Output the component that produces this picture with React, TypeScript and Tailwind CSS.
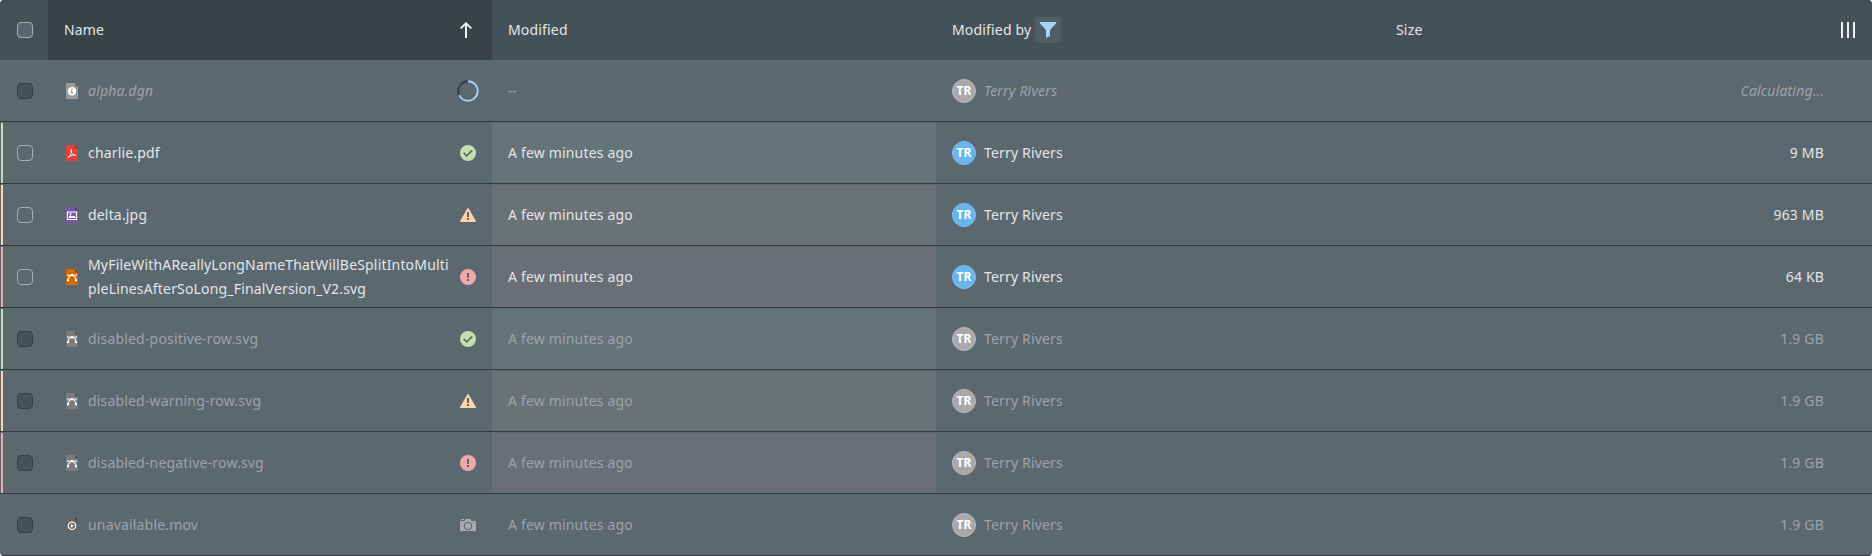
import React from "react";

type Status = "positive" | "warning" | "negative" | "loading" | "camera";
type FileKind = "dgn" | "pdf" | "jpg" | "svg" | "svgOff" | "mov";

interface Row {
  name: string;
  kind: FileKind;
  status: Status;
  modified: string;
  size: string;
  disabled?: boolean;
  loading?: boolean;
}

const rows: Row[] = [
  { name: "alpha.dgn", kind: "dgn", status: "loading", modified: "--", size: "Calculating...", disabled: true, loading: true },
  { name: "charlie.pdf", kind: "pdf", status: "positive", modified: "A few minutes ago", size: "9 MB" },
  { name: "delta.jpg", kind: "jpg", status: "warning", modified: "A few minutes ago", size: "963 MB" },
  {
    name: "MyFileWithAReallyLongNameThatWillBeSplitIntoMultipleLinesAfterSoLong_FinalVersion_V2.svg",
    kind: "svg",
    status: "negative",
    modified: "A few minutes ago",
    size: "64 KB",
  },
  { name: "disabled-positive-row.svg", kind: "svgOff", status: "positive", modified: "A few minutes ago", size: "1.9 GB", disabled: true },
  { name: "disabled-warning-row.svg", kind: "svgOff", status: "warning", modified: "A few minutes ago", size: "1.9 GB", disabled: true },
  { name: "disabled-negative-row.svg", kind: "svgOff", status: "negative", modified: "A few minutes ago", size: "1.9 GB", disabled: true },
  { name: "unavailable.mov", kind: "mov", status: "camera", modified: "A few minutes ago", size: "1.9 GB", disabled: true },
];

const stripe: Record<Status, string> = {
  positive: "border-[#c3e1af]",
  warning: "border-[#fed3aa]",
  negative: "border-[#efa9a9]",
  loading: "border-transparent",
  camera: "border-transparent",
};

const tint: Record<Status, string> = {
  positive: "bg-[#657478]",
  warning: "bg-[#6b7275]",
  negative: "bg-[#6a6e77]",
  loading: "",
  camera: "",
};

const fileColor: Record<FileKind, string> = {
  dgn: "#9b9b9b",
  pdf: "#e1403c",
  jpg: "#7a56a5",
  svg: "#cf6c00",
  svgOff: "#7b7b7b",
  mov: "#656565",
};

const foldColor: Record<FileKind, string> = {
  dgn: "#6a6a6a",
  pdf: "#9b2c2a",
  jpg: "#513872",
  svg: "#8e4b00",
  svgOff: "#525252",
  mov: "#434343",
};

function FileGlyph({ kind }: { kind: FileKind }) {
  switch (kind) {
    case "dgn":
      return (
        <g>
          <circle cx="8" cy="8.3" r="4.2" fill="#fff" />
          <path d="M7.2 5.800h1.500v1.700H8v1.700h1.300v1.500H6.300V9.700h.9z" fill="#9b9b9b" />
        </g>
      );
    case "pdf":
      return (
        <path
          d="M4 12.600c1.800-.6 3.700-4.500 3.700-7.400 0-1-1-1-1 0 0 2.400 2.300 5.100 5.300 5.100-2-1-5.800 0-8 2.300z"
          fill="none"
          stroke="#fff"
          strokeWidth="0.8"
        />
      );
    case "jpg":
      return (
        <g>
          <path d="M3.500 5h9v7.500h-9z" fill="none" stroke="#fff" strokeWidth="1.200" />
          <path d="M5 11V9.300l1.500-1L8 9.500l1-.7 2.200.7V11zM5.500 6.200h2v1.500h-2z" fill="#fff" />
        </g>
      );
    case "svg":
    case "svgOff":
      return (
        <g fill="#fff">
          <path d="M6.700 5h2.600v.7h2.300V5.300h1.200v1.500h-1.200v-.2H10c1.300.8 2.100 2 2.300 3.600h.7v2.100h-2.100v-2.100h.4c-.2-1.500-.9-2.500-2-3H6.700c-1.100.5-1.800 1.500-2 3h.4v2.100H3v-2.100h.7C3.900 8.600 4.700 7.400 6 6.600H4.400v.2H3.200V5.300h1.200v.4h2.300z" />
        </g>
      );
    case "mov":
      return (
        <g>
          <circle cx="8" cy="8.800" r="3.700" fill="none" stroke="#fff" strokeWidth="1.200" />
          <path d="M6.900 6.800l3 2-3 2z" fill="#fff" />
        </g>
      );
  }
}

function FileIcon({ kind }: { kind: FileKind }) {
  return (
    <svg className="size-4 shrink-0" viewBox="0 0 16 16">
      <path d="M2 0h9l3 3.500V16H2z" fill={fileColor[kind]} />
      <path d="M11 0l3 3.500h-3z" fill={foldColor[kind]} />
      <FileGlyph kind={kind} />
    </svg>
  );
}

function StatusIcon({ status }: { status: Status }) {
  switch (status) {
    case "loading":
      return (
        <svg className="-mx-[3px] size-[22px] shrink-0" viewBox="0 0 22 22" fill="none" strokeWidth="2">
          <circle cx="11" cy="11" r="9.700" stroke="#343f45" />
          <circle cx="11" cy="11" r="9.700" stroke="#a3d6f5" pathLength="100" strokeDasharray="68 32" transform="rotate(-90 11 11)" />
        </svg>
      );
    case "positive":
      return (
        <svg className="size-4 shrink-0" viewBox="0 0 16 16">
          <path
            fillRule="evenodd"
            fill="#c3e1af"
            d="M8 0a8 8 0 1 0 0 16A8 8 0 0 0 8 0zM6.700 12.100L3.100 8.500l1.200-1.200 2.400 2.400 4.900-4.900 1.200 1.200z"
          />
        </svg>
      );
    case "warning":
      return (
        <svg className="size-4 shrink-0" viewBox="0 0 16 16">
          <path
            fillRule="evenodd"
            fill="#fed3aa"
            d="M8.700 1.400a.8.8 0 0 0-1.400 0L.1 13.900A.8.8 0 0 0 .8 15h14.400a.8.8 0 0 0 .7-1.100zM9 13H7v-2h2zm0-3H7V5h2z"
          />
        </svg>
      );
    case "negative":
      return (
        <svg className="size-4 shrink-0" viewBox="0 0 16 16">
          <path fillRule="evenodd" fill="#efa9a9" d="M8 0a8 8 0 1 0 0 16A8 8 0 0 0 8 0zM9 12H7v-2h2zm0-3H7V4h2z" />
        </svg>
      );
    case "camera":
      return (
        <svg className="size-4 shrink-0" viewBox="0 0 16 16">
          <path
            fillRule="evenodd"
            fill="#a7a9ab"
            d="M5.500 2h5l1 2H16v10H0V4h4.500zM1 2h3v1H1zM8 4.900a4.100 4.100 0 1 0 0 8.200 4.100 4.100 0 0 0 0-8.200zM13 5v1h1V5z"
          />
          <circle cx="8" cy="9" r="3" fill="#a7a9ab" />
        </svg>
      );
  }
}

function Checkbox({ disabled, filled }: { disabled?: boolean; filled?: boolean }) {
  const look = disabled ? "border-[#343f45] bg-[#45525a]" : filled ? "border-[#a7aeb3] bg-[#5b6770]" : "border-[#a7aeb3]";
  return <span role="checkbox" aria-checked="false" className={`size-4 rounded-[4px] border ${look}`} />;
}

function TableRow({ row }: { row: Row }) {
  const text = `${row.disabled ? "text-[#9ba3a8]" : "text-[#e3e5e7]"} ${row.loading ? "italic" : ""}`;
  return (
    <div className={`grid h-[62px] grid-cols-[48px_repeat(4,444px)_48px] border-b border-[#2f3b41] pt-px ${text}`}>
      <div className="flex pl-px">
        <div className={`flex w-full items-center border-l-2 pl-[14px] ${stripe[row.status]}`}>
          <Checkbox disabled={row.disabled} />
        </div>
      </div>
      <div className="flex items-center gap-2 px-4">
        <FileIcon kind={row.kind} />
        <span className="min-w-0 flex-1 break-all">{row.name}</span>
        <StatusIcon status={row.status} />
      </div>
      <div className={`flex items-center px-4 ${tint[row.status]}`}>{row.modified}</div>
      <div className="flex items-center gap-2 px-4">
        <span
          className={`flex size-6 items-center justify-center rounded-full border text-[12px] font-bold not-italic text-white ${
            row.disabled ? "border-[#b9b9b9] bg-[#a9a9a9]" : "border-[#7cc1f2] bg-[#6ab5ec]"
          }`}
        >
          TR
        </span>
        {"Terry Rivers"}
      </div>
      <div className="flex items-center justify-end">{row.size}</div>
    </div>
  );
}

export default function App() {
  return (
    <div className="h-[556px] w-[1872px] overflow-hidden rounded-[4px] bg-[#5b6870] font-['Noto_Sans',sans-serif] text-[14px] leading-6 tracking-[0.0125em]">
      <div className="grid h-[60px] grid-cols-[48px_repeat(4,444px)_48px] bg-[#455159] text-[#e3e5e7]">
        <div className="flex items-center pl-[17px]">
          <Checkbox filled />
        </div>
        <div className="flex items-center justify-between bg-[#384347] pr-[18px] pl-4">
          Name
          <svg className="size-4" viewBox="0 0 16 16" fill="#f0f0f0">
            <path d="M8 0l6 5.800-1.300 1.300L9 3.600V16H7V3.600L3.300 7.100 2 5.800z" />
          </svg>
        </div>
        <div className="flex items-center px-4">Modified</div>
        <div className="flex items-center gap-1 px-4">
          Modified by
          <span className="flex size-[26px] items-center justify-center rounded-[4px] bg-[#4f5e67]">
            <svg className="size-4" viewBox="0 0 16 16" fill="#a3d6f5">
              <path d="M0 0h16v1.500L10 8v6l-4 2V8L0 1.500z" />
            </svg>
          </span>
        </div>
        <div className="flex items-center px-4">Size</div>
        <div className="flex items-center pl-4">
          <svg className="size-4" viewBox="0 0 16 16" fill="#f0f0f0">
            <path d="M1 0h2v16H1zM7 0h2v16H7zM13 0h2v16h-2z" />
          </svg>
        </div>
      </div>
      {rows.map((row) => (
        <TableRow key={row.name} row={row} />
      ))}
    </div>
  );
}
